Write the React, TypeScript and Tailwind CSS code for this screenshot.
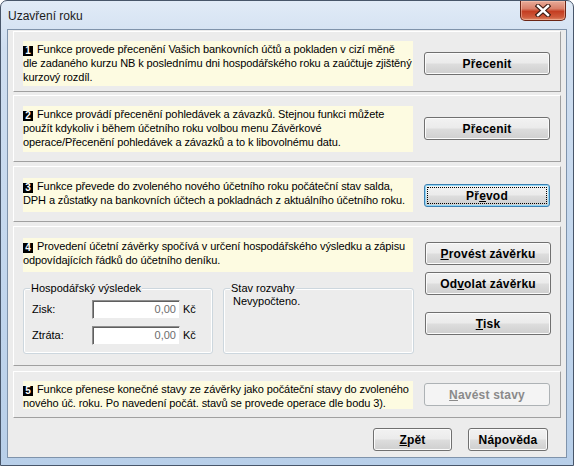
import React from "react";

const btnFace =
  "bg-[linear-gradient(to_bottom,#f2f2f2_0%,#ebebeb_48%,#dddddd_52%,#cfcfcf_100%)]";

type Kind = "normal" | "focus" | "disabled";

function Btn({
  children,
  className = "",
  kind = "normal",
}: {
  children: React.ReactNode;
  className?: string;
  kind?: Kind;
}) {
  const look =
    kind === "disabled"
      ? "border-[#adb2b5] bg-[#f4f4f4] text-[#8a8a8a]"
      : kind === "focus"
      ? `border-[#3c7fb1] ${btnFace} shadow-[inset_0_0_0_1px_#8ed6f7] text-black`
      : `border-[#707070] ${btnFace} shadow-[inset_0_0_0_1px_#fbfbfb] text-black`;
  return (
    <div
      className={`relative h-[23px] shrink-0 rounded-[3px] border flex items-center justify-center text-[12px] font-bold tracking-[0.2px] ${look} ${className}`}
    >
      {kind === "focus" && (
        <span className="absolute inset-[2px] border border-dotted border-black" />
      )}
      <span className="relative">{children}</span>
    </div>
  );
}

function Badge({ n }: { n: string }) {
  return (
    <span className="inline-flex items-center justify-center w-[10px] h-[10px] bg-black text-white text-[10px] font-bold leading-none mr-[4px] align-[-1px]">
      {n}
    </span>
  );
}

function Note({
  n,
  lines,
  className,
}: {
  n: string;
  lines: string[];
  className: string;
}) {
  return (
    <div
      className={`w-[390px] shrink-0 bg-[#fdfbe1] text-[11px] leading-[14px] tracking-[-0.1px] whitespace-nowrap pt-[1px] ${className}`}
    >
      {lines.map((l, i) => (
        <div key={i}>
          {i === 0 && <Badge n={n} />}
          {l}
        </div>
      ))}
    </div>
  );
}

const panel =
  "ml-[5px] w-[548px] shrink-0 border border-t-white border-l-white border-r-[#a0a0a0] border-b-[#a0a0a0] flex";

function Field({ label, className = "" }: { label: string; className?: string }) {
  return (
    <div className={`flex items-center ${className}`}>
      <span className="w-[68px] pl-[8px]">{label}</span>
      <div className="w-[88px] h-[19px] bg-white border border-t-[#8e8e8e] border-l-[#8e8e8e] border-r-[#ececec] border-b-[#ececec] shadow-[inset_1px_1px_0_#5f5f5f] flex items-center justify-end pr-[3px] text-[#6d6d6d]">
        0,00
      </div>
      <span className="ml-[3px]">Kč</span>
    </div>
  );
}

export default function App() {
  return (
    <div className="w-[574px] h-[466px] font-['Liberation_Sans',Arial,sans-serif] text-[11px] text-black">
      <div className="relative w-[574px] h-[466px] rounded-t-[7px] border border-[#48566a] bg-[linear-gradient(to_bottom,#e1ebf7_0%,#cfdef0_10%,#c2d6ed_60%,#b8cfe9_100%)] flex flex-col">
        {/* title bar */}
        <div className="h-[28px] shrink-0 flex items-center pl-[7px] pt-[2px] text-[12px] text-[#1b1b1b]">
          Uzavření roku
        </div>
        {/* close button */}
        <div className="absolute top-0 right-[7px] w-[46px] h-[20px] rounded-b-[5px] border border-t-0 border-[#6b2516] bg-[linear-gradient(to_bottom,#e8ab99_0%,#d9806a_40%,#c43e22_55%,#cf5b3c_85%,#de8a6a_100%)] shadow-[inset_0_0_0_1px_rgba(255,210,190,0.45)] flex items-center justify-center">
          <svg width="16" height="13" viewBox="0 0 16 13">
            <path
              d="M3 2 L13 11 M13 2 L3 11"
              stroke="#3b1a12"
              strokeWidth="4.6"
              strokeLinecap="square"
            />
            <path
              d="M3 2 L13 11 M13 2 L3 11"
              stroke="#ffffff"
              strokeWidth="2.4"
              strokeLinecap="square"
            />
          </svg>
        </div>

        {/* client area */}
        <div className="ml-[6px] w-[560px] h-[429px] shrink-0 border border-[#7f93ab] bg-[#ececec] flex flex-col">
          {/* 1 */}
          <div className={`${panel} mt-[1px] h-[61px]`}>
            <Note
              n="1"
              className="ml-[9px] mt-[9px] h-[45px]"
              lines={[
                "Funkce provede přecenění Vašich bankovních účtů a pokladen v cizí měně",
                "dle zadaného kurzu NB k poslednímu dni hospodářského roku a zaúčtuje zjištěný",
                "kurzový rozdíl.",
              ]}
            />
            <Btn className="ml-[11px] mt-[20px] w-[126px]">Přecenit</Btn>
          </div>

          {/* 2 */}
          <div className={`${panel} mt-[3px] h-[67px]`}>
            <Note
              n="2"
              className="ml-[9px] mt-[10px] h-[46px]"
              lines={[
                "Funkce provádí přecenění pohledávek a závazků. Stejnou funkci můžete",
                "použít kdykoliv i během účetního roku volbou menu Závěrkové",
                "operace/Přecenění pohledávek a závazků a to k libovolnému datu.",
              ]}
            />
            <Btn className="ml-[11px] mt-[21px] w-[126px]">Přecenit</Btn>
          </div>

          {/* 3 */}
          <div className={`${panel} mt-[4px] h-[56px]`}>
            <Note
              n="3"
              className="ml-[9px] mt-[11px] h-[34px]"
              lines={[
                "Funkce převede do zvoleného nového účetního roku počáteční stav salda,",
                "DPH a zůstatky na bankovních účtech a pokladnách z aktuálního účetního roku.",
              ]}
            />
            <Btn kind="focus" className="ml-[11px] mt-[17px] w-[126px]">
              Př<u>e</u>vod
            </Btn>
          </div>

          {/* 4 */}
          <div className={`${panel} mt-[4px] h-[140px]`}>
            <div className="ml-[9px] mt-[11px] flex flex-col">
              <Note
                n="4"
                className="h-[34px]"
                lines={[
                  "Provedení účetní závěrky spočívá v určení hospodářského výsledku a zápisu",
                  "odpovídajících řádků do účetního deníku.",
                ]}
              />
              <div className="mt-[16px] flex gap-[10px]">
                <div className="relative w-[190px] h-[66px] rounded-[3px] border border-[#cdd7de] shadow-[inset_0_0_0_1px_#ffffff] flex flex-col">
                  <span className="absolute top-[-8px] left-[6px] px-[1px] bg-[#ececec] leading-[14px]">
                    Hospodářský výsledek
                  </span>
                  <Field label="Zisk:" className="mt-[11px]" />
                  <Field label="Ztráta:" className="mt-[7px]" />
                </div>
                <div className="relative w-[191px] h-[66px] rounded-[3px] border border-[#cdd7de] shadow-[inset_0_0_0_1px_#ffffff]">
                  <span className="absolute top-[-8px] left-[6px] px-[1px] bg-[#ececec] leading-[14px]">
                    Stav rozvahy
                  </span>
                  <div className="mt-[5px] pl-[9px] leading-[14px]">Nevypočteno.</div>
                </div>
              </div>
            </div>
            <div className="ml-[11px] mt-[15px] flex flex-col">
              <Btn className="w-[126px]">
                <u>P</u>rovést závěrku
              </Btn>
              <Btn className="mt-[7px] w-[126px]">
                Od<u>v</u>olat závěrku
              </Btn>
              <Btn className="mt-[17px] w-[126px]">
                <u>T</u>isk
              </Btn>
            </div>
          </div>

          {/* 5 */}
          <div className={`${panel} mt-[5px] h-[47px]`}>
            <Note
              n="5"
              className="ml-[9px] mt-[9px] h-[28px]"
              lines={[
                "Funkce přenese konečné stavy ze závěrky jako počáteční stavy do zvoleného",
                "nového úč. roku. Po navedení počát. stavů se provede operace dle bodu 3).",
              ]}
            />
            <Btn kind="disabled" className="ml-[11px] mt-[11px] w-[126px]">
              <u>N</u>avést stavy
            </Btn>
          </div>

          {/* dialog buttons */}
          <div className="mt-[10px] flex justify-end gap-[16px] pr-[18px]">
            <Btn className="w-[79px]">
              <u>Z</u>pět
            </Btn>
            <Btn className="w-[80px]">Nápověda</Btn>
          </div>
        </div>
      </div>
    </div>
  );
}
